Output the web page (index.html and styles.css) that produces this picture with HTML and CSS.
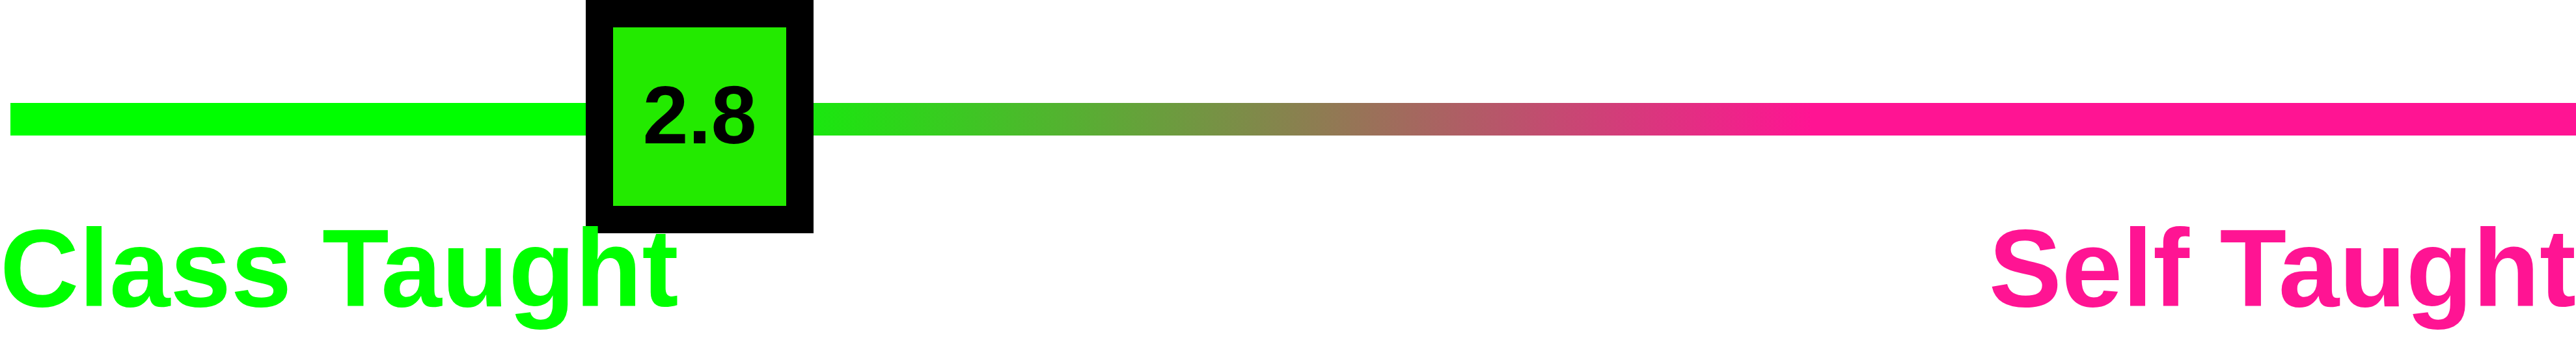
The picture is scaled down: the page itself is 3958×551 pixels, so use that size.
FILE: index.html
```html
<!DOCTYPE html>
<html lang="en">
<head>
<meta charset="utf-8">
<title>Class Taught vs Self Taught</title>
<link rel="stylesheet" href="styles.css">
</head>
<body>
  <div class="scale">
    <div class="slider">
      <div class="track"></div>
      <div class="thumb"><span class="value">2.8</span></div>
    </div>
    <div class="labels">
      <span class="label label-left">Class Taught</span>
      <span class="label label-right">Self Taught</span>
    </div>
  </div>
</body>
</html>
```

FILE: styles.css
```css
html, body {
  margin: 0;
  padding: 0;
  background: #ffffff;
}

body {
  font-family: "Liberation Sans", Arial, sans-serif;
  width: 3958px;
  height: 551px;
  overflow: hidden;
}

.scale {
  display: flex;
  flex-direction: column;
}

.slider {
  position: relative;
  height: 328px;
  display: flex;
  align-items: flex-start;
  padding-left: 16px;
}

.track {
  flex: 1;
  height: 50px;
  margin-top: 158px;
  background: linear-gradient(to right, #00ff00 1059px, #ff1493 2767px);
}

.thumb {
  position: absolute;
  top: 0;
  left: 900px;
  width: 266px;
  height: 274px;
  border: 42px solid #000000;
  background: #23ea00;
  display: flex;
  align-items: center;
  justify-content: center;
}

.value {
  font-weight: bold;
  font-size: 126px;
  line-height: 1;
  color: #000000;
  padding-bottom: 5px;
}

.labels {
  position: relative;
  display: flex;
  justify-content: space-between;
  font-weight: bold;
  font-size: 168px;
  line-height: 1;
}

.label-left {
  color: #00ff00;
}

.label-right {
  color: #ff1493;
}
```
